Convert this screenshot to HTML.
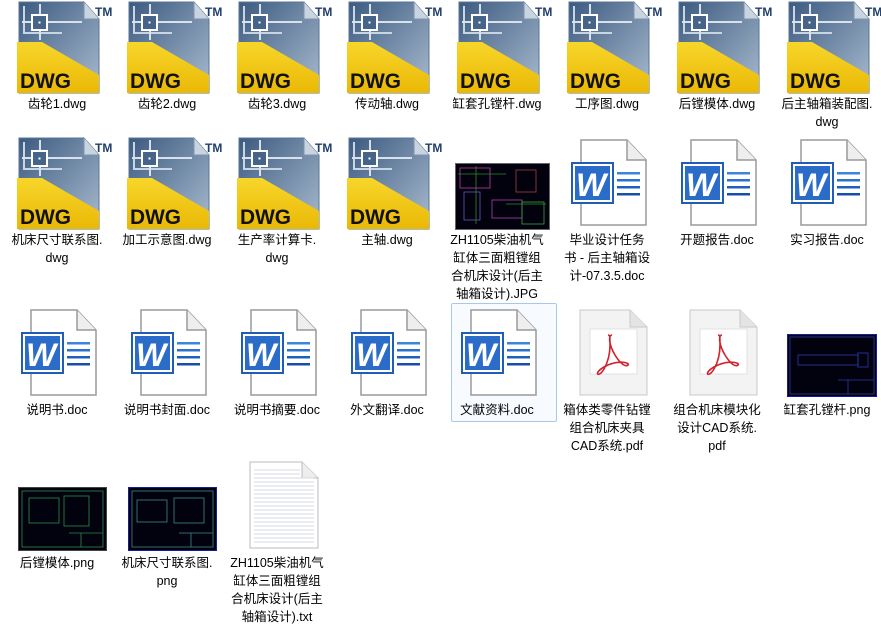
<!DOCTYPE html>
<html><head><meta charset="utf-8"><style>
body{margin:0;width:881px;height:621px;background:#fff;position:relative;overflow:hidden;font-family:"Liberation Sans","Noto Sans CJK SC",sans-serif;font-size:12.5px;color:#000}
.c{position:absolute;width:110px;}
.c svg{position:absolute;left:0;top:0}
.t{position:absolute;left:0;width:110px;text-align:center;line-height:18px;font-size:12.5px}
.sel{position:absolute;left:451px;top:303px;width:104px;height:117px;border:1px solid #a8c8ea;border-radius:2px;background:#f7fbff}
.th{position:absolute;background:#02020e}
</style></head><body>
<svg width="0" height="0" style="position:absolute">
<defs>
<linearGradient id="gb" x1="0" y1="0" x2="1" y2="1"><stop offset="0" stop-color="#3c5a80"/><stop offset="1" stop-color="#a9bccf"/></linearGradient>
<linearGradient id="gy" x1="0" y1="0" x2="0" y2="1"><stop offset="0" stop-color="#f7d62a"/><stop offset="1" stop-color="#eab806"/></linearGradient>
<symbol id="dwg" viewBox="0 0 110 96">
<path d="M17 2H82L97 19V93H17Z" fill="url(#gb)" stroke="#5a7494"/>
<path d="M82 2V19H97" fill="#c8d4e0" stroke="#7f95ad"/>
<path d="M22 6V33H60" fill="none" stroke="#c8d6e4" stroke-width="2"/>
<line x1="20" y1="22" x2="80" y2="22" stroke="#d8e2ec" stroke-width="2"/>
<line x1="38" y1="4" x2="38" y2="40" stroke="#d8e2ec" stroke-width="2"/>
<rect x="30" y="15" width="15" height="15" fill="#46648a" stroke="#fff" stroke-width="2"/>
<rect x="36.5" y="21.5" width="2" height="2" fill="#fff"/>
<path d="M15 42H40L97 75V93H15Z" fill="url(#gy)"/>
<text x="18" y="88" font-family="Liberation Sans" font-weight="bold" font-size="21" textLength="51" lengthAdjust="spacingAndGlyphs" fill="#111">DWG</text>
<text x="93" y="16" font-family="Liberation Sans" font-weight="bold" font-size="12" fill="#213f6b">TM</text>
</symbol>
<symbol id="doc" viewBox="0 0 110 100">
<path d="M29 10H75L94 30V95H29Z" fill="#fff" stroke="#9a9a9a" stroke-width="1.5"/>
<path d="M75 10V30H94" fill="#eee" stroke="#9a9a9a" stroke-width="1.5"/>
<rect x="19" y="32" width="43" height="42" fill="#1f5db8"/>
<rect x="21" y="34" width="39" height="38" fill="#fff"/>
<rect x="23" y="36" width="35" height="34" fill="#2a6cc8"/>
<text x="24" y="66" font-family="Liberation Sans" font-style="italic" font-weight="bold" font-size="32" fill="#fff">W</text>
<rect x="65" y="42" width="23" height="2.5" fill="#3b86dc"/>
<rect x="65" y="49" width="23" height="2.5" fill="#2b72cf"/>
<rect x="65" y="56" width="23" height="2.5" fill="#2060bd"/>
<rect x="65" y="63" width="23" height="2.5" fill="#194ea8"/>
</symbol>
<symbol id="pdf" viewBox="0 0 110 100">
<path d="M28 10H78L95 27V95H28Z" fill="#f3f3f3" stroke="#c8c8c8"/>
<path d="M78 10V27H95" fill="#e4e4e4" stroke="#c8c8c8"/>
<rect x="38" y="29" width="47" height="45" fill="#fff" stroke="#e2e2e2"/>
<path d="M60 35c-4 0-3 10 3 20s11 12 13 10-6-4-14-2-14 6-16 9 2 4 6-3 6-15 6-24 0-10-2-10" fill="none" stroke="#d2232a" stroke-width="1.6"/>
</symbol>
</defs></svg>

<!-- row 1 -->
<div class="c" style="left:2px;top:0"><svg width="110" height="96"><use href="#dwg"/></svg><div class="t" style="top:95px">齿轮1.dwg</div></div>
<div class="c" style="left:112px;top:0"><svg width="110" height="96"><use href="#dwg"/></svg><div class="t" style="top:95px">齿轮2.dwg</div></div>
<div class="c" style="left:222px;top:0"><svg width="110" height="96"><use href="#dwg"/></svg><div class="t" style="top:95px">齿轮3.dwg</div></div>
<div class="c" style="left:332px;top:0"><svg width="110" height="96"><use href="#dwg"/></svg><div class="t" style="top:95px">传动轴.dwg</div></div>
<div class="c" style="left:442px;top:0"><svg width="110" height="96"><use href="#dwg"/></svg><div class="t" style="top:95px">缸套孔镗杆.dwg</div></div>
<div class="c" style="left:552px;top:0"><svg width="110" height="96"><use href="#dwg"/></svg><div class="t" style="top:95px">工序图.dwg</div></div>
<div class="c" style="left:662px;top:0"><svg width="110" height="96"><use href="#dwg"/></svg><div class="t" style="top:95px">后镗模体.dwg</div></div>
<div class="c" style="left:772px;top:0"><svg width="110" height="96"><use href="#dwg"/></svg><div class="t" style="top:95px">后主轴箱装配图.<br>dwg</div></div>

<!-- row 2 -->
<div class="c" style="left:2px;top:136px"><svg width="110" height="96"><use href="#dwg"/></svg><div class="t" style="top:95px">机床尺寸联系图.<br>dwg</div></div>
<div class="c" style="left:112px;top:136px"><svg width="110" height="96"><use href="#dwg"/></svg><div class="t" style="top:95px">加工示意图.dwg</div></div>
<div class="c" style="left:222px;top:136px"><svg width="110" height="96"><use href="#dwg"/></svg><div class="t" style="top:95px">生产率计算卡.<br>dwg</div></div>
<div class="c" style="left:332px;top:136px"><svg width="110" height="96"><use href="#dwg"/></svg><div class="t" style="top:95px">主轴.dwg</div></div>
<div class="th" style="left:455px;top:163px;width:93px;height:65px;border:1px solid #666">
<svg width="93" height="65"><g fill="none" stroke-width="0.8"><rect x="4" y="4" width="30" height="20" stroke="#c03aa0"/><rect x="8" y="28" width="16" height="28" stroke="#7050c0"/><rect x="60" y="6" width="20" height="22" stroke="#a04040"/><rect x="36" y="36" width="30" height="18" stroke="#b040b0"/><rect x="66" y="38" width="22" height="22" stroke="#40a040"/><path d="M2 10H50M20 2V60M50 40H90" stroke="#2a8a2a"/></g></svg></div>
<div class="t" style="left:442px;top:231px">ZH1105柴油机气<br>缸体三面粗镗组<br>合机床设计(后主<br>轴箱设计).JPG</div>
<div class="c" style="left:552px;top:130px"><svg width="110" height="100"><use href="#doc"/></svg><div class="t" style="top:101px">毕业设计任务<br>书 - 后主轴箱设<br>计-07.3.5.doc</div></div>
<div class="c" style="left:662px;top:130px"><svg width="110" height="100"><use href="#doc"/></svg><div class="t" style="top:101px">开题报告.doc</div></div>
<div class="c" style="left:772px;top:130px"><svg width="110" height="100"><use href="#doc"/></svg><div class="t" style="top:101px">实习报告.doc</div></div>

<!-- row 3 -->
<div class="sel"></div>
<div class="c" style="left:2px;top:300px"><svg width="110" height="100"><use href="#doc"/></svg><div class="t" style="top:101px">说明书.doc</div></div>
<div class="c" style="left:112px;top:300px"><svg width="110" height="100"><use href="#doc"/></svg><div class="t" style="top:101px">说明书封面.doc</div></div>
<div class="c" style="left:222px;top:300px"><svg width="110" height="100"><use href="#doc"/></svg><div class="t" style="top:101px">说明书摘要.doc</div></div>
<div class="c" style="left:332px;top:300px"><svg width="110" height="100"><use href="#doc"/></svg><div class="t" style="top:101px">外文翻译.doc</div></div>
<div class="c" style="left:442px;top:300px"><svg width="110" height="100"><use href="#doc"/></svg><div class="t" style="top:101px">文献资料.doc</div></div>
<div class="c" style="left:552px;top:300px"><svg width="110" height="100"><use href="#pdf"/></svg><div class="t" style="top:101px">箱体类零件钻镗<br>组合机床夹具<br>CAD系统.pdf</div></div>
<div class="c" style="left:662px;top:300px"><svg width="110" height="100"><use href="#pdf"/></svg><div class="t" style="top:101px">组合机床模块化<br>设计CAD系统.<br>pdf</div></div>
<div class="th" style="left:787px;top:334px;width:88px;height:61px;border:1px solid #1a1aa0">
<svg width="88" height="61"><g fill="none" stroke="#2a3ab0" stroke-width="0.8"><rect x="2" y="2" width="84" height="57"/><rect x="10" y="20" width="60" height="10"/><rect x="70" y="18" width="10" height="14"/><path d="M50 45H86M60 45V59"/></g></svg></div>
<div class="t" style="left:772px;top:401px">缸套孔镗杆.png</div>

<!-- row 4 -->
<div class="th" style="left:18px;top:487px;width:87px;height:62px;border:1px solid #444">
<svg width="87" height="62"><g fill="none" stroke="#2a8a4a" stroke-width="0.8"><rect x="3" y="3" width="81" height="56"/><rect x="10" y="10" width="30" height="25"/><rect x="45" y="8" width="25" height="30"/><path d="M50 45H84M62 45V59"/></g></svg></div>
<div class="t" style="left:2px;top:554px">后镗模体.png</div>
<div class="th" style="left:128px;top:487px;width:87px;height:62px;border:1px solid #1a1aa0">
<svg width="87" height="62"><g fill="none" stroke="#3a8a8a" stroke-width="0.8"><rect x="3" y="3" width="81" height="56"/><rect x="8" y="12" width="30" height="22"/><rect x="45" y="10" width="30" height="25"/><path d="M50 45H84M62 45V59"/></g></svg></div>
<div class="t" style="left:112px;top:554px">机床尺寸联系图.<br>png</div>
<div class="c" style="left:222px;top:460px"><svg width="110" height="92">
<path d="M28 2H80L96 18V88H28Z" fill="#fff" stroke="#bbb"/>
<path d="M80 2V18H96" fill="#eee" stroke="#bbb"/>
<g stroke="#d4d8e0" stroke-width="1">
<path d="M32 10H78M32 14H78M32 18H92M32 22H92M32 26H92M32 30H92M32 34H92M32 38H92M32 42H92M32 46H92M32 50H92M32 54H92M32 58H92M32 62H92M32 66H92M32 70H92M32 74H92M32 78H92M32 82H92"/></g>
</svg><div class="t" style="top:94px">ZH1105柴油机气<br>缸体三面粗镗组<br>合机床设计(后主<br>轴箱设计).txt</div></div>
</body></html>
